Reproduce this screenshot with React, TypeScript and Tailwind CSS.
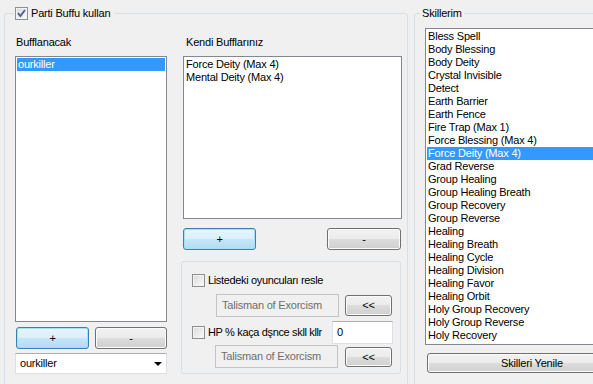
import React from 'react';

const skills = [
  'Bless Spell',
  'Body Blessing',
  'Body Deity',
  'Crystal Invisible',
  'Detect',
  'Earth Barrier',
  'Earth Fence',
  'Fire Trap (Max 1)',
  'Force Blessing (Max 4)',
  'Force Deity (Max 4)',
  'Grad Reverse',
  'Group Healing',
  'Group Healing Breath',
  'Group Recovery',
  'Group Reverse',
  'Healing',
  'Healing Breath',
  'Healing Cycle',
  'Healing Division',
  'Healing Favor',
  'Healing Orbit',
  'Holy Group Recovery',
  'Holy Group Reverse',
  'Holy Recovery',
];

const btnGray =
  'flex items-center justify-center rounded-[3px] border border-[#707070] bg-[linear-gradient(#f2f2f2_0%,#ebebeb_50%,#dddddd_50%,#cfcfcf_100%)] shadow-[inset_0_0_0_1px_#fbfbfb]';
const btnBlue =
  'flex items-center justify-center rounded-[3px] border border-[#3c7fb1] bg-[linear-gradient(#e8f5fc_0%,#dbeffb_50%,#c6e6f8_50%,#b3dbf3_100%)] shadow-[inset_0_0_0_1px_#9fe3f8]';

function Check({ checked }: { checked?: boolean }) {
  return (
    <span className="flex h-[13px] w-[13px] shrink-0 items-center justify-center border border-[#8e8f8f] bg-[linear-gradient(135deg,#dadada,#fbfbfb)] shadow-[inset_0_0_0_1px_#f3f3f3]">
      {checked && (
        <svg width="11" height="11" viewBox="0 0 11 11">
          <path d="M2 5.2 L4.4 8 L9 2" fill="none" stroke="#4a5f97" strokeWidth="1.9" />
        </svg>
      )}
    </span>
  );
}

function ListItem({ text, selected }: { text: string; selected?: boolean }) {
  return (
    <div className={`h-[13px] whitespace-nowrap pl-[1px] ${selected ? 'bg-[#3399ff] text-white' : ''}`}>
      {text}
    </div>
  );
}

function DisabledBox({ text }: { text: string }) {
  return (
    <div className="flex h-[23px] w-[123px] items-center border border-[#c2c5c8] bg-[#f0f0f0] pl-[5px] text-[#6d6d6d]">
      {text}
    </div>
  );
}

export default function App() {
  return (
    <div className="flex h-[384px] w-[593px] overflow-hidden bg-[#f0f0f0] font-['Liberation_Sans',Arial,sans-serif] text-[11px] leading-[13px] tracking-[-0.2px] text-black">
      {/* left group */}
      <fieldset className="ml-[4px] mt-[6px] h-[400px] w-[404px] shrink-0 rounded-[3px] border border-[#d5dfe5]">
        <legend className="ml-[9px] flex h-[14px] items-center pl-[1px] pr-[5px]">
          <Check checked />
          <span className="ml-[3px]">Parti Buffu kullan</span>
        </legend>
        <div className="flex pl-[10px] pt-[16px]">
          {/* column 1 */}
          <div className="flex w-[152px] flex-col">
            <div className="pl-[1px]">Bufflanacak</div>
            <div className="mt-[7px] h-[266px] border border-[#828790] bg-white p-[1px]">
              <ListItem text="ourkiller" selected />
            </div>
            <div className="mt-[5px] flex gap-[6px] pl-[1px]">
              <button className={`${btnBlue} h-[22px] w-[73px]`}>+</button>
              <button className={`${btnGray} h-[22px] w-[72px]`}>-</button>
            </div>
            <div className="mt-[4px] flex h-[21px] items-center justify-between border border-[#dbdfe6] border-t-[#abadb3] bg-white pl-[4px] pr-[4px]">
              <span>ourkiller</span>
              <svg width="8" height="4" viewBox="0 0 8 4">
                <path d="M0 0 H8 L4 4 Z" fill="#000" />
              </svg>
            </div>
          </div>

          {/* column 2 */}
          <div className="ml-[14px] flex w-[220px] flex-col">
            <div className="pl-[5px]">Kendi Bufflarınız</div>
            <div className="ml-[2px] mt-[7px] h-[163px] w-[219px] border border-[#828790] bg-white p-[1px]">
              <ListItem text="Force Deity (Max 4)" />
              <ListItem text="Mental Deity (Max 4)" />
            </div>
            <div className="mt-[9px] flex justify-between pl-[2px]">
              <button className={`${btnBlue} h-[22px] w-[73px]`}>+</button>
              <button className={`${btnGray} h-[22px] w-[74px]`}>-</button>
            </div>
            <div className="mt-[11px] flex h-[113px] w-[220px] flex-col rounded-[3px] border border-[#d5dfe5] pl-[10px]">
              <div className="mt-[12px] flex h-[13px] items-center">
                <Check />
                <span className="ml-[3px] w-[119px] overflow-hidden whitespace-nowrap tracking-[-0.35px]">Listedeki oyuncuları resle</span>
              </div>
              <div className="mt-[7px] flex items-start pl-[24px]">
                <DisabledBox text="Talisman of Exorcism" />
                <button className={`${btnGray} ml-[6px] mt-[1px] h-[21px] w-[47px]`}>&lt;&lt;</button>
              </div>
              <div className="mt-[4px] flex h-[23px] items-center">
                <Check />
                <span className="ml-[3px] w-[121px] whitespace-nowrap tracking-[-0.35px]">HP % kaça dşnce skll kllr</span>
                <div className="ml-[3px] flex h-[23px] w-[61px] items-center border border-[#dbdfe6] border-t-[#abadb3] bg-white pl-[4px]">
                  0
                </div>
              </div>
              <div className="mt-[1px] flex items-start pl-[23px]">
                <DisabledBox text="Talisman of Exorcism" />
                <button className={`${btnGray} ml-[7px] mt-[2px] h-[20px] w-[47px]`}>&lt;&lt;</button>
              </div>
            </div>
          </div>
        </div>
      </fieldset>

      {/* right group */}
      <fieldset className="ml-[6px] mt-[6px] h-[400px] w-[240px] shrink-0 rounded-[3px] border border-[#d5dfe5]">
        <legend className="ml-[5px] flex h-[14px] items-center px-[2px]">Skillerim</legend>
        <div className="flex flex-col pl-[10px] pt-[8px]">
          <div className="h-[317px] w-[220px] border border-[#828790] bg-white p-[1px]">
            {skills.map((s) => (
              <ListItem key={s} text={s} selected={s === 'Force Deity (Max 4)'} />
            ))}
          </div>
          <button className={`${btnGray} ml-[2px] mt-[8px] h-[20px] w-[210px]`}>Skilleri Yenile</button>
        </div>
      </fieldset>
    </div>
  );
}
